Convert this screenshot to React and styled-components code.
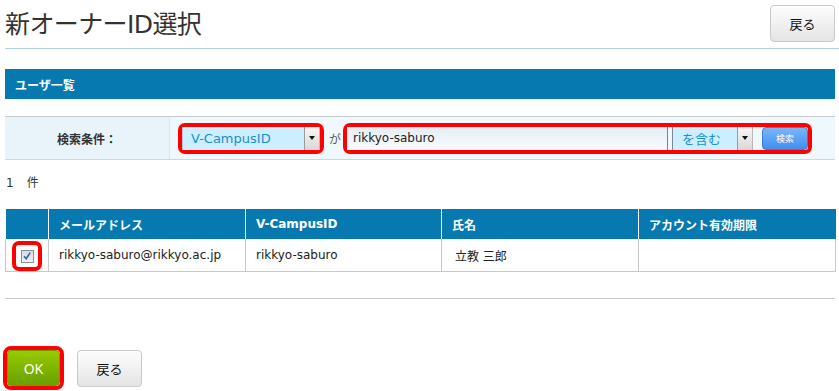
import React from 'react'
import styled, { createGlobalStyle } from 'styled-components'

const GlobalStyle = createGlobalStyle`
  body {
    margin: 0;
    background: #fff;
    font-family: "DejaVu Sans", "Noto Sans CJK JP", sans-serif;
    font-size: 12px;
    color: #333;
  }
`

const Page = styled.div`
  width: 839px;
  padding-left: 5px;
  box-sizing: border-box;
`

const Header = styled.div`
  display: flex;
  align-items: center;
  justify-content: space-between;
  height: 49px;
  padding: 5px 4px 7px 0;
  box-sizing: border-box;
  border-bottom: 1px solid #a9d2da;
`

const Title = styled.h1`
  margin: 0 0 3px;
  font-size: 25px;
  font-weight: normal;
  color: #333;
  letter-spacing: -0.6px;
`

const GrayButton = styled.button`
  width: 65px;
  height: 37px;
  border: 1px solid #c9c9c9;
  border-radius: 4px;
  background: linear-gradient(#fdfdfd, #e4e4e4);
  font-family: "Noto Sans CJK JP", sans-serif;
  font-size: 13px;
  color: #111;
  padding: 0;
`

const Content = styled.div`
  width: 830px;
`

const SectionBar = styled.div`
  margin-top: 20px;
  height: 30px;
  display: flex;
  align-items: center;
  padding-left: 10px;
  background: #0679b1;
  color: #fff;
  font-weight: bold;
  font-family: "Noto Sans CJK JP", sans-serif;
  font-size: 12px;
`

const SearchRow = styled.div`
  margin-top: 17px;
  display: flex;
  height: 44px;
  border-top: 1px solid #c8cdd0;
  border-bottom: 1px solid #d2d6d8;
  box-sizing: border-box;
  background: #eef8fd;
`

const SearchLabel = styled.div`
  width: 165px;
  display: flex;
  align-items: center;
  justify-content: center;
  background: #e9f4fa;
  border-right: 1px solid #dde6ea;
  box-sizing: border-box;
  font-weight: bold;
  font-size: 12px;
`

const SearchBody = styled.div`
  display: flex;
  align-items: center;
  padding-left: 8px;
`

const Highlight = styled.div`
  display: flex;
  align-items: center;
  border: 4px solid #ff0000;
  border-radius: 7px;
`

const Select = styled.div`
  display: flex;
  width: ${({ $w }) => $w}px;
  height: 23px;
  margin-left: ${({ $ml }) => $ml || 0}px;
  box-sizing: border-box;
  border-left: 1px solid ${({ $dark }) => ($dark ? '#7c8a94' : '#b6c6d0')};
  background: #ccefff;
`

const SelectText = styled.div`
  flex: 1;
  display: flex;
  align-items: center;
  padding-left: ${({ $pad }) => $pad || 8}px;
  color: #1a8fcf;
  font-size: 13px;
`

const SelectArrow = styled.div`
  width: 14px;
  display: flex;
  align-items: center;
  justify-content: center;
  border-left: 1px solid #9a9a9a;
  border-right: 1px solid #b8b8b8;
  background: linear-gradient(#f6f6f6, #d8d8d8);
  &::after {
    content: '';
    border-left: 3.5px solid transparent;
    border-right: 3.5px solid transparent;
    border-top: 4px solid #111;
  }
`

const Ga = styled.span`
  margin: 0 2px 0 5px;
  font-size: 12px;
  color: #555;
`

const TextInput = styled.div`
  width: 321px;
  height: 23px;
  display: flex;
  align-items: center;
  padding-left: 6px;
  box-sizing: border-box;
  border-right: 1px solid #6f8797;
  background: linear-gradient(#e4edf5, #f9fbfd);
  font-size: 12px;
  color: #222;
`

const BlueButton = styled.button`
  margin-left: 9px;
  width: 46px;
  height: 23px;
  padding: 0;
  border: 1px solid #3a7ed6;
  border-radius: 4px;
  background: linear-gradient(#7ab6f7, #3f8ff0);
  color: #fff;
  font-family: "Noto Sans CJK JP", sans-serif;
  font-size: 9px;
`

const Count = styled.div`
  margin-top: 14px;
  height: 18px;
  line-height: 18px;
  padding-left: 1px;
  font-size: 12px;
  span {
    margin-left: 13px;
  }
`

const Table = styled.table`
  margin-top: 17px;
  width: 831px;
  border-collapse: collapse;
  table-layout: fixed;
`

const Th = styled.th`
  width: ${({ $w }) => ($w ? `${$w}px` : 'auto')};
  box-sizing: border-box;
  height: 30px;
  padding: 0 0 0 10px;
  text-align: left;
  background: #0679b1;
  color: #fff;
  font-weight: bold;
  font-size: 12px;
  border-left: 1px solid #fff;
  &:first-child {
    border-left: none;
  }
`

const Td = styled.td`
  height: 30px;
  padding: 0 0 0 ${({ $pad }) => $pad ?? 10}px;
  border: 1px solid #c8c8c8;
  border-top: none;
  font-size: 12px;
  color: #222;
  text-align: ${({ $center }) => ($center ? 'center' : 'left')};
`

const CheckMark = styled.span`
  display: inline-flex;
  align-items: center;
  justify-content: center;
  width: 13px;
  height: 13px;
  box-sizing: border-box;
  border: 1px solid #8e8f8f;
  background: linear-gradient(#d4dbe6, #eef1f5);
`

const CheckBoxFrame = styled.span`
  display: inline-flex;
  align-items: center;
  justify-content: center;
  width: 30px;
  height: 30px;
  box-sizing: border-box;
  border: 4px solid #ff0000;
  border-radius: 7px;
  vertical-align: middle;
  margin-top: 2px;
`

const Divider = styled.div`
  margin-top: 26px;
  border-top: 1px solid #c8c8c8;
`

const Footer = styled.div`
  margin-top: 47px;
  margin-left: -2px;
  display: flex;
  align-items: center;
  gap: 13px;
`

const OkFrame = styled.div`
  border: 4px solid #ff0000;
  border-radius: 8px;
  display: flex;
`

const OkButton = styled.button`
  width: 53px;
  height: 36px;
  padding: 0;
  border: 1px solid #6f9c00;
  border-radius: 4px;
  background: linear-gradient(#98cb00, #68a000);
  color: #fff;
  font-family: "Noto Sans", sans-serif;
  font-weight: normal;
  font-size: 14px;
`

export default function App() {
  return (
    <>
      <GlobalStyle />
      <Page>
        <Header>
          <Title>新オーナーID選択</Title>
          <GrayButton>戻る</GrayButton>
        </Header>
        <Content>
          <SectionBar>ユーザ一覧</SectionBar>
          <SearchRow>
            <SearchLabel>検索条件：</SearchLabel>
            <SearchBody>
              <Highlight>
                <Select $w={138}>
                  <SelectText>V-CampusID</SelectText>
                  <SelectArrow />
                </Select>
              </Highlight>
              <Ga>が</Ga>
              <Highlight>
                <TextInput>rikkyo-saburo</TextInput>
                <Select $w={81} $ml={4} $dark>
                  <SelectText $pad={9}>を含む</SelectText>
                  <SelectArrow />
                </Select>
                <BlueButton>検索</BlueButton>
              </Highlight>
            </SearchBody>
          </SearchRow>
          <Count>
            1<span>件</span>
          </Count>
          <Table>
            <thead>
              <tr>
                <Th $w={43} />
                <Th $w={197}>メールアドレス</Th>
                <Th $w={196}>V-CampusID</Th>
                <Th $w={197}>氏名</Th>
                <Th>アカウント有効期限</Th>
              </tr>
            </thead>
            <tbody>
              <tr>
                <Td $center $pad={0}>
                  <CheckBoxFrame>
                    <CheckMark>
                      <svg width="10" height="10" viewBox="0 0 10 10">
                        <path d="M2 5.2 L4.2 7.6 L8.2 1.6" fill="none" stroke="#3a5fa8" strokeWidth="1.6" />
                      </svg>
                    </CheckMark>
                  </CheckBoxFrame>
                </Td>
                <Td>rikkyo-saburo@rikkyo.ac.jp</Td>
                <Td>rikkyo-saburo</Td>
                <Td $pad={13}>立教 三郎</Td>
                <Td />
              </tr>
            </tbody>
          </Table>
          <Divider />
        </Content>
        <Footer>
          <OkFrame>
            <OkButton>OK</OkButton>
          </OkFrame>
          <GrayButton>戻る</GrayButton>
        </Footer>
      </Page>
    </>
  )
}
